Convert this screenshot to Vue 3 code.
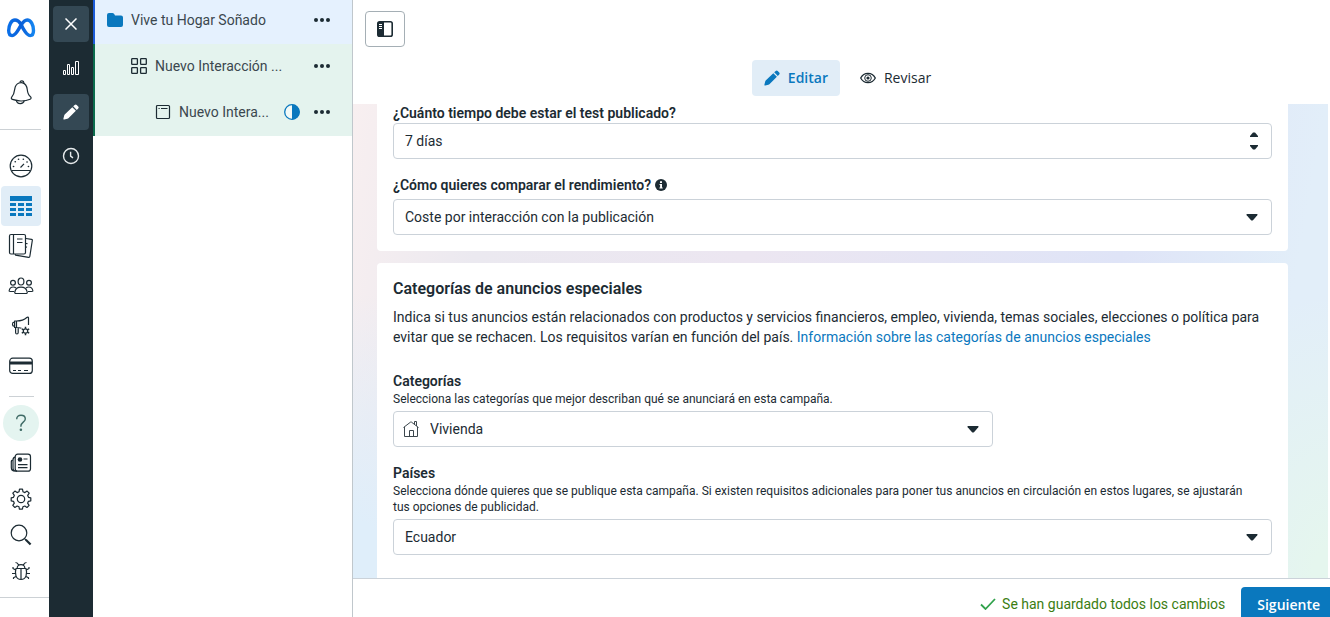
<script setup>
import { ref } from 'vue'

const days = ref('7 días')
const metric = ref('Coste por interacción con la publicación')
const category = ref('Vivienda')
const country = ref('Ecuador')
</script>

<template>
  <div class="shell">
    <nav class="rail" aria-label="Navegación principal">
      <a class="item logo" href="#" aria-label="Meta">
        <svg width="30" height="20" viewBox="0 0 30 20" fill="none" stroke-width="3.4" stroke-linecap="round">
          <defs>
            <linearGradient id="meta" x1="0" y1="0" x2="1" y2="0">
              <stop offset="0" stop-color="#0a6fe8" />
              <stop offset="0.5" stop-color="#0a5fd8" />
              <stop offset="1" stop-color="#1584f0" />
            </linearGradient>
          </defs>
          <path stroke="url(#meta)" d="M15 6.2C13 3.2 11.2 2 9 2 5.2 2 2.7 7.3 2.7 12.6c0 3.2 1.2 5 3.4 5 2.3 0 3.800-1.600 6.600-6.400L15 7.200C17 4 18.600 2 21.200 2c3.700 0 6.300 5 6.300 10.500 0 3.300-1.300 5.100-3.400 5.100-2.400 0-3.800-1.700-6.600-6.400L15 6.200" />
        </svg>
      </a>
      <a class="item bell" href="#" aria-label="Notificaciones">
        <svg width="24" height="26" viewBox="0 0 24 26" class="line">
          <path d="M10.800 3.400a2.100 2.100 0 0 1 4.100.6" />
          <path d="M10 4c-2.500.9-3.900 3.200-4.300 6.300-.5 4-1.200 5.800-3 7.900-.7.800-.4 1.900.7 2.200 3 .9 5.500 1.500 8.500 1.600 3.500.1 6.500-.5 9.200-1.700 1.300-.6 1.300-1.900.2-2.700-2.200-1.600-2.700-3.900-3.100-7.300-.4-3.600-2-5.900-4.700-6.500-1.300-.3-2.400-.1-3.500.2z" />
          <path d="M7.300 21.400c.8 4.200 7 4.200 8 .3" />
        </svg>
      </a>
      <span class="rule wide"></span>
      <a class="item first" href="#" aria-label="Resumen de la cuenta">
        <svg width="24" height="24" viewBox="0 0 24 24" class="line">
          <circle cx="12" cy="12" r="10.800" />
          <path d="M2.700 16.500h18.600M11.500 13.500l3.500-3.600" />
          <path class="dots" d="M4.500 12.500h.1M6.200 7.800h.1M9.500 5.200h.1M14.300 5.200h.1M18 8h.1M19.400 12.500h.1" />
        </svg>
      </a>
      <a class="item active" href="#" aria-label="Campañas">
        <svg width="22" height="20" viewBox="0 0 22 20" fill="#0a78be">
          <path d="M0 0h22v5H0zM0 7h6v3H0zM8 7h6v3H8zM16 7h6v3h-6zM0 12h6v3H0zM8 12h6v3H8zM16 12h6v3h-6zM0 17h6v3H0zM8 17h6v3H8zM16 17h6v3h-6z" />
        </svg>
      </a>
      <a class="item" href="#" aria-label="Informes">
        <svg width="26" height="26" viewBox="0 0 26 26" class="line">
          <rect x="1.500" y="1.500" width="16" height="19.500" rx="1.500" />
          <path d="M5.500 1.500V21M9 6h5.500M9 9.500h5.500M18 5.500l5.500.8q1 .2.8 1.200L21.800 23.500q-.2 1-1.200.8L7.500 22.200l-.3-1M18 10.500l1.500.2M18 14l1 .2" />
        </svg>
      </a>
      <a class="item" href="#" aria-label="Públicos">
        <svg width="26" height="18" viewBox="0 0 26 18" class="line">
          <ellipse cx="13" cy="4.500" rx="2.900" ry="3.500" />
          <circle cx="5" cy="5.800" r="2.400" />
          <circle cx="21" cy="5.800" r="2.400" />
          <path d="M8 16.500c-1 0-1.400-.6-1.200-1.500.6-3 3-4.800 6.200-4.800s5.600 1.800 6.200 4.800c.2.900-.2 1.500-1.200 1.500zM6 14.500H2q-1 0-.8-1c.5-2.500 2-3.500 4-3.500q1.700 0 2.700 1M20 14.500h4q1 0 .8-1c-.5-2.500-2-3.500-4-3.500q-1.700 0-2.700 1" />
        </svg>
      </a>
      <a class="item" href="#" aria-label="Configuración de anuncios">
        <svg width="20" height="20" viewBox="0 0 20 20" class="line">
          <path d="M5.500 5c4.500 0 8-1.300 10.300-3.500.8-.7 1.700-.4 1.700.6v7M5.500 5v6.500c2 0 3.500.2 5 .7M5.500 5H3.600v6.500h1.900M3.600 6.200H3q-1.500 0-1.500 2t1.500 2h.6M4.600 11.500v5q0 1.500 1.300 1.500t1.300-1.500v-4.600" />
          <circle cx="14.500" cy="15" r="2.200" />
          <path stroke-width="1.500" d="M14.500 10.800v2M14.500 17.200v2M10.800 12.900l1.800 1M16.400 16.100l1.800 1M10.800 17.100l1.800-1M16.400 13.900l1.800-1" />
        </svg>
      </a>
      <a class="item" href="#" aria-label="Facturación">
        <svg width="26" height="18" viewBox="0 0 26 18" class="line">
          <rect x="1.700" y="1.200" width="22.600" height="15.200" rx="3" />
          <path fill="#1c2b33" stroke="none" d="M2 4.500h22v3H2z" />
          <path d="M5 13.500h3M10 13.500h3M16 13.500h4" />
        </svg>
      </a>
      <span class="rule short"></span>
      <a class="help" href="#" aria-label="Ayuda">
        <svg width="12" height="18" viewBox="0 0 12 18" fill="none" stroke="#3f6b66" stroke-width="1.400">
          <path d="M1.700 5.200C1.700 2.600 3.400 1.200 6 1.200s4.300 1.500 4.300 3.700c0 3.200-4.400 3.300-4.400 7.100v.8" />
          <circle cx="5.900" cy="15.800" r=".6" fill="#3f6b66" />
        </svg>
      </a>
      <a class="item tight" href="#" aria-label="Novedades">
        <svg width="22" height="20" viewBox="0 0 22 20" class="line">
          <rect x="5.200" y="1.200" width="15.300" height="17" rx="2.500" />
          <path d="M5.200 4.200C3.200 4.500 3 5.500 3 7v8c0 2 1 3.200 4 3.200M3 7c-1.500 0-1.700 1-1.700 2v5.500c0 2.500 1 3.700 4 3.700M8 11.700h9.500M8 14.700h9.500M13.500 6h4" />
          <circle cx="10" cy="6.500" r="2.300" fill="#1c2b33" stroke="none" />
        </svg>
      </a>
      <a class="item tight" href="#" aria-label="Configuración">
        <svg width="22" height="22" viewBox="0 0 22 22" class="line">
          <circle cx="11" cy="11" r="3.700" />
          <path d="M9.500 1.200h3l.5 2.600 1.900.8 2.200-1.500 2.100 2.100-1.500 2.200.8 1.900 2.300.5v3l-2.400.5-.8 1.900 1.500 2.200-2.100 2.100-2.200-1.500-1.900.8-.5 2.400h-3L9 18.800l-1.900-.8-2.200 1.500-2.100-2.100 1.500-2.200-.8-1.900L1.200 12.800v-3l2.300-.5.8-1.900-1.500-2.200 2.100-2.100 2.200 1.500L9 3.800z" />
        </svg>
      </a>
      <a class="item tight" href="#" aria-label="Buscar">
        <svg width="22" height="22" viewBox="0 0 22 22" class="line">
          <circle cx="9" cy="9" r="7.800" />
          <path d="M14.800 14.800l1.500 1.500" />
          <path stroke-width="2.200" d="M15.800 15.800l4.800 4.700" />
        </svg>
      </a>
      <a class="item tight" href="#" aria-label="Informar de un problema">
        <svg width="20" height="20" viewBox="0 0 20 20" class="line">
          <path d="M5 7.500h10c1.500 5 .3 11-5 11s-6.500-6-5-11zM10 7.500v11M6.200 7.500C6 4.800 7.600 3.700 10 3.700s4 1.100 3.800 3.800M7.600 4C7 2.500 6 1.500 4.500 1.500M12.400 4c.6-1.500 1.600-2.500 3.100-2.500M4.700 9L2 7.500V6M4.200 12.500H1M5 15.500l-2.500 1.200V18M15.300 9L18 7.500V6M15.800 12.500H19M15 15.500l2.500 1.200V18" />
        </svg>
      </a>
      <span class="rule full"></span>
    </nav>

    <nav class="dark" aria-label="Herramientas">
      <button class="tool on" type="button" aria-label="Cerrar">
        <svg width="12" height="12" viewBox="0 0 12 12" fill="none" stroke="#fff" stroke-width="1.500">
          <path d="M.5.5l11 11M11.500.5l-11 11" />
        </svg>
      </button>
      <button class="tool" type="button" aria-label="Gráficos">
        <svg width="16" height="16" viewBox="0 0 16 16" fill="none" stroke="#fff">
          <path d="M.5 10.500h2v4h-2zM4.500 4.500h2v10h-2zM8.500 7.500h2v7h-2zM12.500 1.500h3v13h-3z" />
        </svg>
      </button>
      <button class="tool on" type="button" aria-label="Editar">
        <svg width="16" height="16" viewBox="0 0 16 16" fill="#fff">
          <path d="M9.300 3.200l3.600 3.600-7.500 7.500q-.4.400-1 .5L1.200 15.600q-.9.100-.8-.8l.8-3.200q.1-.6.500-1zM10.200 2.300L11.700.9q1-.9 2 0L15.200 2.400q.9 1 0 2L13.800 5.900z" />
        </svg>
      </button>
      <button class="tool" type="button" aria-label="Historial">
        <svg width="18" height="18" viewBox="0 0 18 18" fill="none" stroke="#e6eaec" stroke-width="1.400">
          <circle cx="9" cy="9" r="7.500" />
          <path d="M8.600 4.800v4.400l2.400 1.600" />
        </svg>
      </button>
    </nav>

    <aside class="tree" aria-label="Estructura de la campaña">
      <div class="row campaign">
        <svg width="16" height="14" viewBox="0 0 16 14" fill="#0a78be">
          <path d="M0 2Q0 0 2 0h3.500Q7 0 7.500 1.500L8 2.500h6q2 0 2 2V12q0 2-2 2H2q-2 0-2-2z" />
        </svg>
        <span class="name">Vive tu Hogar Soñado</span>
        <button class="more" type="button" aria-label="Más opciones"><i></i><i></i><i></i></button>
      </div>
      <div class="row set">
        <svg width="16" height="16" viewBox="0 0 16 16" fill="none" stroke="#1c2b33" stroke-width="1.300">
          <rect x=".7" y=".7" width="5.700" height="5.700" rx=".6" />
          <rect x="9.600" y=".7" width="5.700" height="5.700" rx=".6" />
          <rect x=".7" y="9.600" width="5.700" height="5.700" rx=".6" />
          <rect x="9.600" y="9.600" width="5.700" height="5.700" rx=".6" />
        </svg>
        <span class="name">Nuevo Interacción ...</span>
        <button class="more" type="button" aria-label="Más opciones"><i></i><i></i><i></i></button>
      </div>
      <div class="row ad">
        <svg width="16" height="16" viewBox="0 0 16 16" fill="none" stroke="#1c2b33" stroke-width="1.200">
          <rect x="1.500" y="1.500" width="13" height="13" rx="1" />
          <path d="M3.500 4.500h1.200M6 4.500h6.500" />
        </svg>
        <span class="name">Nuevo Intera...</span>
        <svg width="16" height="16" viewBox="0 0 16 16">
          <circle cx="8" cy="8" r="7.300" fill="#fff" fill-opacity=".5" stroke="#0a78be" stroke-width="1.300" />
          <path d="M8 .5a7.500 7.500 0 0 1 0 15z" fill="#0a78be" />
        </svg>
        <button class="more" type="button" aria-label="Más opciones"><i></i><i></i><i></i></button>
      </div>
    </aside>

    <main class="main">
      <header class="head">
        <button class="toggle" type="button" aria-label="Mostrar u ocultar panel">
          <svg width="16" height="16" viewBox="0 0 16 16">
            <rect x=".8" y=".8" width="14.400" height="14.400" rx="1.800" fill="#fff" stroke="#1c2b33" stroke-width="1.600" />
            <path d="M1 1h6v14H1z" fill="#1c2b33" />
            <path d="M2 3.500h3M2 5.500h3M2 7.500h3" stroke="#fff" />
          </svg>
        </button>
        <div class="tabs">
          <button class="tab current" type="button">
            <svg width="16" height="16" viewBox="0 0 16 16" fill="#0a78be">
              <path d="M9.300 3.200l3.600 3.600-7.500 7.500q-.4.400-1 .5L1.200 15.600q-.9.100-.8-.8l.8-3.200q.1-.6.500-1zM10.200 2.300L11.700.9q1-.9 2 0L15.200 2.400q.9 1 0 2L13.800 5.900z" />
            </svg>
            Editar
          </button>
          <button class="tab" type="button">
            <svg width="16" height="16" viewBox="0 0 16 16" fill="none" stroke="#1c2b33" stroke-width="1.300">
              <path d="M.7 8C2.300 4.900 5 3.300 8 3.300S13.700 4.900 15.300 8C13.700 11.100 11 12.700 8 12.700S2.300 11.100.7 8z" />
              <circle cx="8" cy="8" r="3.300" stroke-width="1" />
              <circle cx="8" cy="8" r="1.600" fill="#1c2b33" stroke="none" />
            </svg>
            Revisar
          </button>
        </div>
      </header>

      <div class="canvas">
        <section class="card test">
          <label class="label top" for="days">¿Cuánto tiempo debe estar el test publicado?</label>
          <div class="control">
            <input id="days" v-model="days" type="text" />
            <span class="stepper">
              <button type="button" aria-label="Aumentar"><svg width="8" height="5" viewBox="0 0 8 5"><path d="M0 5V4l3-3.500h2L8 4v1z" /></svg></button>
              <button type="button" aria-label="Disminuir"><svg width="8" height="5" viewBox="0 0 8 5"><path d="M0 0v1l3 3.500h2L8 1V0z" /></svg></button>
            </span>
          </div>
          <div class="label spaced">
            <label for="metric">¿Cómo quieres comparar el rendimiento?</label>
            <svg width="12" height="12" viewBox="0 0 12 12">
              <circle cx="6" cy="6" r="6" fill="#1c2b33" />
              <path d="M5 2.300h2v1.600H5zM4.500 5H7v3.500h.7v1H4.400v-1h.7V6h-.6z" fill="#fff" />
            </svg>
          </div>
          <div class="control gap">
            <select id="metric" v-model="metric"><option>Coste por interacción con la publicación</option></select>
            <svg class="caret" width="12" height="7" viewBox="0 0 12 7"><path d="M1 0h10q1 .2.300 1.200L7.200 6q-1.200 1.200-2.400 0L.7 1.200Q0 .2 1 0z" /></svg>
          </div>
        </section>

        <section class="card special">
          <h2>Categorías de anuncios especiales</h2>
          <p class="intro">
            Indica si tus anuncios están relacionados con productos y servicios financieros, empleo, vivienda, temas sociales, elecciones o política para evitar que se rechacen. Los requisitos varían en función del país.
            <a href="#">Información sobre las categorías de anuncios especiales</a>
          </p>

          <label class="label cat" for="category">Categorías</label>
          <p class="hint">Selecciona las categorías que mejor describan qué se anunciará en esta campaña.</p>
          <div class="control gap narrow">
            <svg class="house" width="16" height="16" viewBox="0 0 16 16" fill="none" stroke="#3c474d">
              <path d="M1.500 6v9.500h13V6M.5 6.500L7.700 1h.6L15.500 6.500M11.500 3.500V.5h2V5M6.500 15.500v-6h4v6" />
            </svg>
            <select id="category" v-model="category"><option>Vivienda</option></select>
            <svg class="caret" width="12" height="7" viewBox="0 0 12 7"><path d="M1 0h10q1 .2.300 1.200L7.200 6q-1.200 1.200-2.400 0L.7 1.200Q0 .2 1 0z" /></svg>
          </div>

          <label class="label spaced" for="country">Países</label>
          <p class="hint">Selecciona dónde quieres que se publique esta campaña. Si existen requisitos adicionales para poner tus anuncios en circulación en estos lugares, se ajustarán tus opciones de publicidad.</p>
          <div class="control gap">
            <select id="country" v-model="country"><option>Ecuador</option></select>
            <svg class="caret" width="12" height="7" viewBox="0 0 12 7"><path d="M1 0h10q1 .2.300 1.200L7.200 6q-1.200 1.200-2.400 0L.7 1.200Q0 .2 1 0z" /></svg>
          </div>
        </section>
      </div>

      <footer class="foot">
        <span class="saved">
          <svg width="16" height="12" viewBox="0 0 16 12" fill="none" stroke="#31a24c" stroke-width="1.800"><path d="M1 6.500L5.500 11 15 1" /></svg>
          Se han guardado todos los cambios
        </span>
        <button class="next" type="button">Siguiente</button>
      </footer>
    </main>
  </div>
</template>

<style>
body {
  margin: 0;
  background: #fff;
}
</style>

<style scoped>
.shell {
  display: flex;
  height: 100vh;
  overflow: hidden;
  color: #1c2b33;
  font: 14px/20px Roboto, "Noto Sans", sans-serif;
}
* {
  box-sizing: border-box;
}
button,
input,
select {
  margin: 0;
  padding: 0;
  border: 0;
  background: none;
  color: inherit;
  font: inherit;
}
svg {
  flex: none;
  display: block;
}
.line {
  fill: none;
  stroke: #1c2b33;
  stroke-width: 1.2;
  stroke-linejoin: round;
}
.dots {
  stroke-width: 1.6;
  stroke-linecap: round;
}

.rail {
  flex: none;
  width: 49px;
  display: flex;
  flex-direction: column;
}
.item {
  flex: none;
  display: flex;
  align-items: center;
  justify-content: center;
  width: 40px;
  height: 40px;
  margin-left: 1px;
  border-radius: 4px;
}
.logo {
  margin-top: 8px;
}
.bell {
  margin-top: 24px;
}
.active {
  background: #e1edf7;
}
.first {
  margin-top: 16px;
}
.tight {
  height: 36px;
}
.rule {
  flex: none;
  height: 1px;
  background: #ccd1d5;
}
.wide {
  width: 41px;
  margin-top: 17px;
}
.short {
  width: 25px;
  margin: 10px 0 8px 9px;
}
.full {
  margin-top: 8px;
}
.help {
  flex: none;
  display: flex;
  align-items: center;
  justify-content: center;
  width: 36px;
  height: 36px;
  margin: 0 0 4px 3px;
  border-radius: 50%;
  background: #e4f4f0;
}

.dark {
  flex: none;
  width: 44px;
  display: flex;
  flex-direction: column;
  gap: 8px;
  padding: 6px 4px;
  background: #1c2b33;
}
.tool {
  display: flex;
  align-items: center;
  justify-content: center;
  width: 36px;
  height: 36px;
  border-radius: 4px;
}
.on {
  background: #344854;
}

.tree {
  flex: none;
  width: 259px;
  color: #3b474e;
}
.row {
  display: flex;
  align-items: center;
  gap: 8px;
  height: 46px;
  padding: 0 20px 2px 36px;
  border-left: 2px solid #0b6b4c;
  background: #e4f3ee;
}
.campaign {
  height: 44px;
  padding: 0 20px 4px 12px;
  border-left-color: #1c5bd8;
  background: #e5f1fe;
}
.ad {
  padding-left: 60px;
}
.ad .more {
  margin-left: 4px;
}
.name {
  flex: 1;
  min-width: 0;
  white-space: nowrap;
}
.more {
  display: flex;
  align-items: center;
  justify-content: center;
  gap: 2px;
  width: 20px;
  height: 20px;
}
.more i {
  width: 4px;
  height: 4px;
  border-radius: 50%;
  background: #1c2b33;
}

.main {
  flex: 1;
  min-width: 0;
  display: flex;
  flex-direction: column;
  border-left: 1px solid #c0c7cc;
}
.head {
  flex: none;
  padding: 11px 12px 8px;
}
.toggle {
  display: flex;
  align-items: center;
  justify-content: center;
  width: 40px;
  height: 36px;
  border: 1px solid #a5afb5;
  border-radius: 4px;
}
.tabs {
  display: flex;
  justify-content: center;
  gap: 8px;
  margin-top: 13px;
  padding-left: 12px;
}
.tab,
.next {
  font-family: "Open Sans", "Noto Sans", sans-serif;
}
.tab {
  display: flex;
  align-items: center;
  gap: 8px;
  height: 36px;
  padding: 0 12px;
  border-radius: 4px;
}
.current {
  background: #e1edf7;
  color: #0a78be;
  font-weight: 600;
}

.canvas {
  flex: 1;
  min-height: 0;
  overflow: hidden;
  display: flex;
  flex-direction: column;
  gap: 12px;
  margin-right: 2px;
  padding: 0 40px 0 24px;
  background:
    radial-gradient(ellipse 16% 60% at 100% 100%, #e5f6ee 10%, transparent),
    radial-gradient(ellipse 20% 60% at 0 100%, #dfeefa 20%, transparent),
    linear-gradient(100deg, #f8eff0 0%, #ebe9f0 14%, #ece6f1 40%, #dfe4f7 75%, #e2eef9 92%);
}
.card {
  flex: none;
  padding: 16px;
  background: #fff;
}
.test {
  padding-top: 0;
  border-radius: 0 0 4px 4px;
}
.special {
  flex: 1;
  border-radius: 4px 4px 0 0;
}
.label {
  display: block;
  font-weight: 600;
}
.top {
  line-height: 19px;
}
div.label {
  display: flex;
  align-items: center;
  gap: 4px;
}
.spaced {
  margin-top: 16px;
}
.cat {
  margin-top: 24px;
}
h2 {
  margin: 0;
  font-size: 16px;
  font-weight: 600;
  line-height: 20px;
}
p {
  margin: 0;
}
.intro {
  margin-top: 8px;
}
.intro a {
  color: #0a78be;
  text-decoration: none;
}
.hint {
  padding-right: 16px;
  font-size: 12px;
  line-height: 16px;
}
.control {
  position: relative;
  display: flex;
  align-items: center;
  height: 36px;
  border: 1px solid #cbd2d9;
  border-radius: 4px;
}
.gap {
  margin-top: 4px;
}
.narrow {
  max-width: 600px;
}
.control input,
.control select {
  flex: 1;
  min-width: 0;
  height: 100%;
  padding: 0 40px 0 11px;
  appearance: none;
  outline: none;
}
.house {
  margin-left: 9px;
}
.caret {
  position: absolute;
  right: 13px;
  fill: #1c2b33;
  pointer-events: none;
}
.stepper {
  display: grid;
  gap: 8px;
  margin-right: 13px;
}
.stepper button {
  display: block;
}
.stepper svg {
  fill: #1c2b33;
}

.foot {
  flex: none;
  display: flex;
  align-items: flex-start;
  justify-content: flex-end;
  gap: 16px;
  height: 39px;
  overflow: hidden;
  padding-top: 8px;
  border-top: 1px solid #cbd2d9;
}
.saved {
  display: flex;
  align-items: center;
  gap: 6px;
  height: 34px;
  color: #3b7d12;
}
.next {
  flex: none;
  height: 36px;
  padding: 0 10px 0 16px;
  border-radius: 4px 0 0 0;
  background: #0a78be;
  color: #fff;
  font-weight: 600;
}
</style>
